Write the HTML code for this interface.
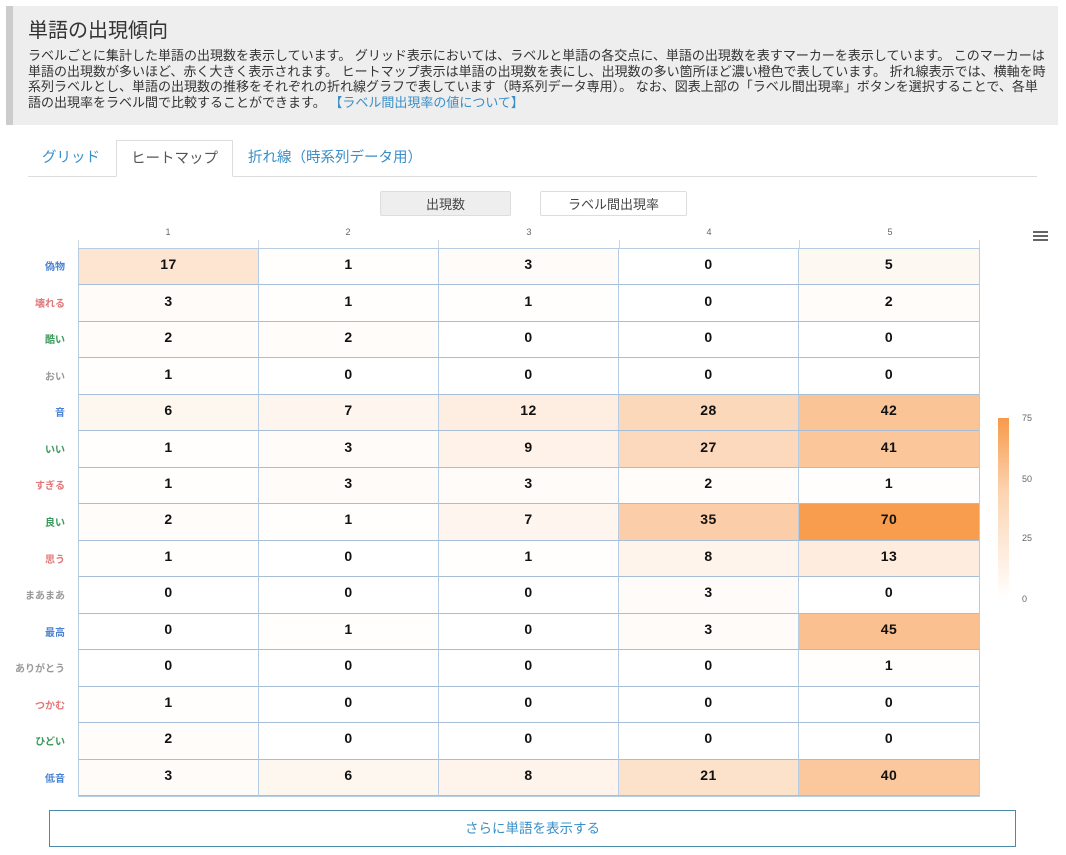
<!DOCTYPE html><html><head><meta charset="utf-8"><style>
*{margin:0;padding:0;box-sizing:border-box}
body{width:1066px;height:855px;background:#fff;font-family:"Liberation Sans","Noto Sans CJK JP",sans-serif;position:relative;overflow:hidden;color:#333}
.hdr{position:absolute;left:6px;top:6px;width:1052px;height:119px;background:#eee;border-left:7px solid #ccc}
.hdr h1{position:absolute;left:15px;top:13px;font-size:20px;font-weight:normal;color:#333;line-height:24px}
.hdr p{position:absolute;left:15px;top:42px;width:1022px;font-size:13px;line-height:15.6px;color:#333}
.hdr a{color:#3a8fc8}
.tabline{position:absolute;left:28px;top:176px;width:1009px;border-top:1px solid #ddd}
.tab{position:absolute;top:140px;height:37px;font-size:14.5px;line-height:37px;color:#3a8fc8}
.tab.act{border:1px solid #ddd;border-bottom:1px solid #fff;background:#fff;color:#555;text-align:center}
.btn{position:absolute;top:191px;height:25px;font-size:13px;line-height:25px;text-align:center;border:1px solid #ddd;border-radius:2px;color:#444}
.cl{position:absolute;top:227px;font-size:9px;color:#666;width:20px;text-align:center}
.tick{position:absolute;top:240px;height:8px;border-left:1px solid #ccd6e0}
.grid{position:absolute;left:78px;top:248px;width:902px;height:549px;display:grid;grid-template-columns:repeat(5,1fr);grid-template-rows:repeat(15,1fr);border:1px solid #b8cde2}
.grid div{border-right:1px solid #b4cce6;border-bottom:1px solid #a6bed8;display:flex;align-items:center;justify-content:center;font-weight:bold;font-size:14px;color:#111;letter-spacing:0.5px;padding-bottom:5px}
.grid div:nth-child(5n){border-right:none}
.rl{position:absolute;right:1001px;font-size:10px;font-weight:bold;text-align:right;white-space:nowrap;margin-top:-1px}
.b{color:#4a82d4}.r{color:#e07878}.g{color:#3a9a5a}.y{color:#999}
.leg{position:absolute;left:998px;top:418px;width:11px;height:181px;background:linear-gradient(#f79a4a,#fcd3b0 40%,#fff)}
.ll{position:absolute;left:1022px;font-size:9px;color:#666}
.more{position:absolute;left:49px;top:810px;width:967px;height:37px;border:1px solid #4a8aa8;text-align:center;line-height:35px;font-size:13.5px;color:#3a8fc8}
.menu{position:absolute;left:1033px;top:231px;width:15px}
.menu i{display:block;height:2px;background:#666;margin-bottom:2px}
</style></head><body>
<div class="hdr"><h1>単語の出現傾向</h1><p>ラベルごとに集計した単語の出現数を表示しています。 グリッド表示においては、ラベルと単語の各交点に、単語の出現数を表すマーカーを表示しています。 このマーカーは単語の出現数が多いほど、赤く大きく表示されます。 ヒートマップ表示は単語の出現数を表にし、出現数の多い箇所ほど濃い橙色で表しています。 折れ線表示では、横軸を時系列ラベルとし、単語の出現数の推移をそれぞれの折れ線グラフで表しています（時系列データ専用）。 なお、図表上部の「ラベル間出現率」ボタンを選択することで、各単語の出現率をラベル間で比較することができます。 <a>【ラベル間出現率の値について】</a></p></div>
<div class="tabline"></div>
<div class="tab" style="left:42px">グリッド</div>
<div class="tab act" style="left:116px;width:117px">ヒートマップ</div>
<div class="tab" style="left:248px">折れ線（時系列データ用）</div>
<div class="btn" style="left:380px;width:131px;background:#eee">出現数</div>
<div class="btn" style="left:540px;width:147px;background:#fff">ラベル間出現率</div>
<div class="cl" style="left:158px">1</div><div class="cl" style="left:338px">2</div><div class="cl" style="left:519px">3</div><div class="cl" style="left:699px">4</div><div class="cl" style="left:880px">5</div>
<div class="tick" style="left:78px"></div><div class="tick" style="left:258px"></div><div class="tick" style="left:438px"></div><div class="tick" style="left:619px"></div><div class="tick" style="left:799px"></div><div class="tick" style="left:979px"></div>
<div class="menu"><i></i><i></i><i></i></div>
<div class="rl b" style="top:259px">偽物</div>
<div class="rl r" style="top:296px">壊れる</div>
<div class="rl g" style="top:332px">酷い</div>
<div class="rl y" style="top:369px">おい</div>
<div class="rl b" style="top:405px">音</div>
<div class="rl g" style="top:442px">いい</div>
<div class="rl r" style="top:478px">すぎる</div>
<div class="rl g" style="top:515px">良い</div>
<div class="rl r" style="top:552px">思う</div>
<div class="rl y" style="top:588px">まあまあ</div>
<div class="rl b" style="top:625px">最高</div>
<div class="rl y" style="top:661px">ありがとう</div>
<div class="rl r" style="top:698px">つかむ</div>
<div class="rl g" style="top:734px">ひどい</div>
<div class="rl b" style="top:771px">低音</div>
<div class="grid">
<div style="background:#fde5d2">17</div><div style="background:#fffefd">1</div><div style="background:#fffbf8">3</div><div>0</div><div style="background:#fef8f3">5</div>
<div style="background:#fffbf8">3</div><div style="background:#fffefd">1</div><div style="background:#fffefd">1</div><div>0</div><div style="background:#fffcfa">2</div>
<div style="background:#fffcfa">2</div><div style="background:#fffcfa">2</div><div>0</div><div>0</div><div>0</div>
<div style="background:#fffefd">1</div><div>0</div><div>0</div><div>0</div><div>0</div>
<div style="background:#fef7f0">6</div><div style="background:#fef5ee">7</div><div style="background:#feeee1">12</div><div style="background:#fcd8ba">28</div><div style="background:#fac497">42</div>
<div style="background:#fffefd">1</div><div style="background:#fffbf8">3</div><div style="background:#fef2e9">9</div><div style="background:#fcd9bc">27</div><div style="background:#fbc69a">41</div>
<div style="background:#fffefd">1</div><div style="background:#fffbf8">3</div><div style="background:#fffbf8">3</div><div style="background:#fffcfa">2</div><div style="background:#fffefd">1</div>
<div style="background:#fffcfa">2</div><div style="background:#fffefd">1</div><div style="background:#fef5ee">7</div><div style="background:#fbcea9">35</div><div style="background:#f89d4e">70</div>
<div style="background:#fffefd">1</div><div>0</div><div style="background:#fffefd">1</div><div style="background:#fef4eb">8</div><div style="background:#feeddf">13</div>
<div>0</div><div>0</div><div>0</div><div style="background:#fffbf8">3</div><div>0</div>
<div>0</div><div style="background:#fffefd">1</div><div>0</div><div style="background:#fffbf8">3</div><div style="background:#fac090">45</div>
<div>0</div><div>0</div><div>0</div><div>0</div><div style="background:#fffefd">1</div>
<div style="background:#fffefd">1</div><div>0</div><div>0</div><div>0</div><div>0</div>
<div style="background:#fffcfa">2</div><div>0</div><div>0</div><div>0</div><div>0</div>
<div style="background:#fffbf8">3</div><div style="background:#fef7f0">6</div><div style="background:#fef4eb">8</div><div style="background:#fde2cb">21</div><div style="background:#fbc79c">40</div>
</div>
<div class="leg"></div>
<div class="ll" style="top:413px">75</div><div class="ll" style="top:474px">50</div><div class="ll" style="top:533px">25</div><div class="ll" style="top:594px">0</div>
<div class="more">さらに単語を表示する</div>
</body></html>
